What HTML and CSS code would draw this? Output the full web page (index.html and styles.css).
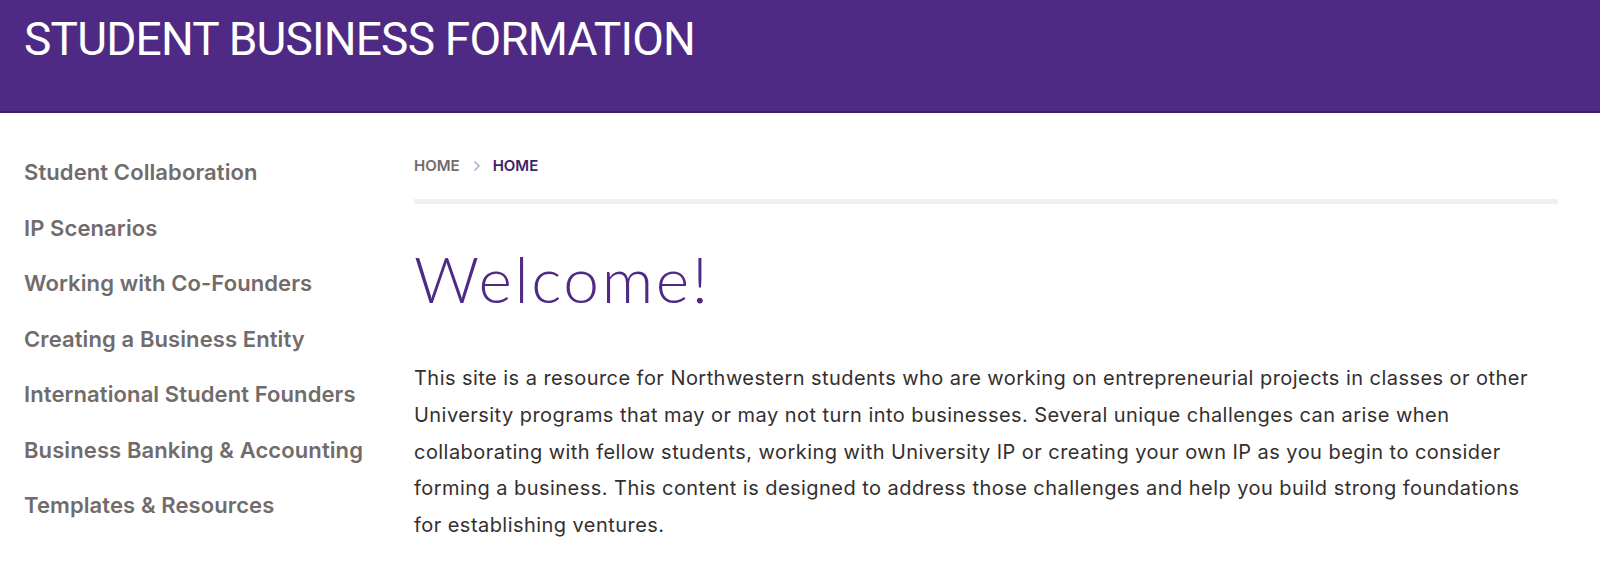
FILE: index.html
```html
<!DOCTYPE html>
<html lang="en">
<head>
<meta charset="utf-8">
<title>Student Business Formation</title>
<link rel="stylesheet" href="styles.css">
</head>
<body>
<header class="site-header">
  <h1 class="site-title">STUDENT BUSINESS FORMATION</h1>
</header>
<div class="layout">
  <nav class="sidebar">
    <a class="nav-link" href="#">Student Collaboration</a>
    <a class="nav-link" href="#">IP Scenarios</a>
    <a class="nav-link" href="#">Working with Co-Founders</a>
    <a class="nav-link" href="#">Creating a Business Entity</a>
    <a class="nav-link" href="#">International Student Founders</a>
    <a class="nav-link" href="#">Business Banking &amp; Accounting</a>
    <a class="nav-link" href="#">Templates &amp; Resources</a>
  </nav>
  <main class="content">
    <div class="breadcrumbs">
      <a class="crumb" href="#">HOME</a>
      <svg class="crumb-sep" width="8" height="12" viewBox="0 0 8 12" aria-hidden="true"><path d="M1.5 1.5 L6 6 L1.5 10.5" fill="none" stroke="#b6acd1" stroke-width="1.6"/></svg>
      <span class="crumb current">HOME</span>
    </div>
    <h2 class="page-title">Welcome!</h2>
    <p class="intro">This site is a resource for Northwestern students who are working on entrepreneurial projects in classes or other University programs that may or may not turn into businesses. Several unique challenges can arise when collaborating with fellow students, working with University IP or creating your own IP as you begin to consider forming a business. This content is designed to address those challenges and help you build strong foundations for establishing ventures.</p>
  </main>
</div>
</body>
</html>
```
FILE: styles.css
```css
html, body {
  margin: 0;
  padding: 0;
  background: #fff;
}
body {
  font-family: Inter, "Liberation Sans", Arial, sans-serif;
  overflow: hidden;
}
.site-header {
  background: #4e2a84;
  height: 113px;
  border-bottom: 2px solid #401f68;
  box-sizing: border-box;
  padding: 12px 0 0 24px;
}
.site-title {
  margin: 0;
  color: #fff;
  font-family: Roboto, "Liberation Sans", Arial, sans-serif;
  font-weight: 400;
  font-size: 46px;
  letter-spacing: -0.8px;
  line-height: 54px;
}
.layout {
  display: flex;
  padding: 0 42px 0 24px;
}
.sidebar {
  width: 390px;
  flex: none;
  display: flex;
  flex-direction: column;
  padding-top: 32px;
}
.nav-link {
  color: #716c6b;
  text-decoration: none;
  font-family: Inter, "Liberation Sans", Arial, sans-serif;
  font-weight: 600;
  font-size: 22px;
  line-height: 55.5px;
  letter-spacing: 0.1px;
}
.content {
  flex: 1;
}
.breadcrumbs {
  padding-top: 44px;
  padding-bottom: 24px;
  border-bottom: 5px solid #f0f0f0;
  font-size: 15px;
  font-weight: 600;
  line-height: 18px;
  display: flex;
  align-items: center;
}
.crumb {
  color: #716c6b;
  text-decoration: none;
}
.crumb-sep {
  margin: 0 12px 0 13px;
}
.crumb.current {
  color: #401f68;
}
.page-title {
  margin: 38px 0 0 0;
  font-family: Lato, "Open Sans", sans-serif;
  font-weight: 300;
  font-size: 64px;
  letter-spacing: 2.6px;
  line-height: 74px;
  color: #4e2a84;
}
.intro {
  margin: 44px 0 0 0;
  padding-right: 16px;
  font-family: Inter, "Liberation Sans", sans-serif;
  font-size: 20px;
  letter-spacing: 0.45px;
  line-height: 36.8px;
  color: #342f2e;
}
```
